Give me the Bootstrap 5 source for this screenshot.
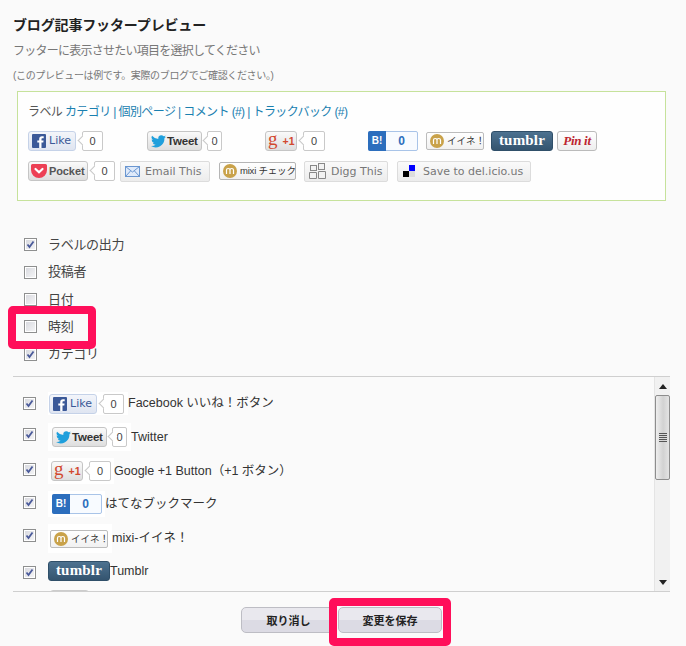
<!DOCTYPE html>
<html lang="ja"><head><meta charset="utf-8">
<link href="https://cdn.jsdelivr.net/npm/bootstrap@5.3.0/dist/css/bootstrap.min.css" rel="stylesheet">
<style>
html,body{height:646px;overflow:hidden}
body{background:#fafafa;color:#333;font:12px/1.2 "Liberation Sans","Noto Sans CJK JP",sans-serif;position:relative}
svg{flex:none}
.pg{width:686px;height:646px;padding:0 16px 0 13px}
.ttl{font-size:14px;font-weight:700;color:#222;height:18px;line-height:18px;margin-top:16px;letter-spacing:-.15px}
.sub{color:#777;font-size:12px;height:16px;line-height:16px;margin-top:9px;letter-spacing:-.75px}
.tiny{color:#777;font-size:10px;height:14px;line-height:14px;margin-top:10px;letter-spacing:-.35px}
.pv{margin:8px 4px 0;height:110px;background:#fefefe;border:1px solid #c6e29b;padding:11px 10px 0}
.lbl{height:18px;line-height:18px;font-size:12px;color:#555;letter-spacing:-.6px;white-space:nowrap}
.lbl a{color:#1a80b0;text-decoration:none}
.lbl i{font-style:normal;color:#1a80b0}
.wr{height:20px;margin-top:10px}
.wr2{margin-top:10px}
.s1{width:119px}.s2{width:118px}.s3{width:103px}
.wg{height:20px;line-height:18px;border:1px solid #c5c5c5;border-radius:3px;background:linear-gradient(#fafafa,#dedede);display:inline-flex;align-items:center;font-weight:700;font-size:11px;color:#444;flex:none;white-space:nowrap}
.fb{width:48px;background:linear-gradient(#f3f5fa,#dfe5f1);border-color:#c5d2e8;color:#3b5998;font:400 11px/18px "DejaVu Sans",sans-serif;padding-left:3px;gap:3px}
.tw{width:55px;padding-left:3px;gap:1px;color:#333;font-size:11.5px;letter-spacing:-.2px}
.gp{width:32px;padding-left:2px;gap:5px;color:#d2482f;font-size:10.5px}
.gp i{font:400 19px/14px "Liberation Serif",serif;color:#d2482f;height:18px}
.pk{width:60px;padding-left:2px;gap:2px;color:#555;font-size:11px;letter-spacing:-.1px}
.ct{height:20px;line-height:18px;border:1px solid #c9c9c9;background:#fff;text-align:center;font-size:11px;color:#444;position:relative;margin-left:6px;border-radius:2px;flex:none}
.ct::before{content:"";position:absolute;left:-4px;top:5px;width:7px;height:7px;border-left:1px solid #c9c9c9;border-bottom:1px solid #c9c9c9;background:#fff;transform:rotate(45deg)}
.c21{width:21px}.c15{width:15px;margin-left:5px}.c22{width:22px}
.hb{width:50px;height:20px;border:1px solid #a9c4e8;border-radius:2px;background:#f8fbff;display:flex;flex:none;color:#2c6ebd;font-weight:700;font-size:12px;line-height:18px}
.hb b{width:18px;margin:-1px 0 -1px -1px;background:#2c6ebd;color:#fff;text-align:center;border-radius:2px 0 0 2px;font-size:10px;line-height:20px}
.hb span{flex:1;text-align:center}
.mi{width:58px;height:18px;margin-left:8px;background:linear-gradient(#fff,#f1f1f1);border:1px solid #bcbcbc;border-radius:2px;display:inline-flex;align-items:center;padding-left:3px;gap:3px;font-size:9.5px;color:#333;flex:none;white-space:nowrap}
.tb{width:62px;height:20px;margin-left:7px;border-radius:3px;border:1px solid #2f4f69;background:linear-gradient(#4d7290,#34546f);color:#fff;font:700 15px/17px "Liberation Serif",serif;text-align:center;flex:none;letter-spacing:.2px}
.pi{width:40px;height:20px;margin-left:4px;border:1px solid #bbb;border-radius:3px;background:linear-gradient(#fff,#eee);color:#bd2530;font:italic 700 13px/18px "Liberation Serif",serif;text-align:center;flex:none;white-space:nowrap;letter-spacing:-.3px}
.sh{height:21px;border:1px solid #dcdcdc;border-radius:2px;background:linear-gradient(#fafafa,#ececec);font:11px/19px "DejaVu Sans",sans-serif;color:#777;display:inline-flex;align-items:center;flex:none;white-space:nowrap;gap:5px;padding-left:4px}
.em{width:90px;margin-left:5px}.dg{width:84px;margin-left:8px}.dl{width:134px;margin-left:9px;gap:8px;padding-left:5px}
.mc{width:77px;height:18px;margin-left:9px;background:linear-gradient(#fff,#f0f0f0);border:1px solid #b5b5b5;border-radius:2px;display:inline-flex;align-items:center;padding-left:3px;gap:3px;font-size:9.5px;letter-spacing:-.2px;color:#333;flex:none;white-space:nowrap}
.opts{margin:30px 0 0 11px;height:145px}
.op{height:27.4px;display:flex;align-items:center;gap:11px;font-size:13px;color:#444;letter-spacing:-.3px}
input.ck{appearance:none;-webkit-appearance:none;width:13px;height:13px;margin:0;border:1px solid #8e8f8f;background:linear-gradient(135deg,#d6d7dd,#f7f7f8);outline:1px solid #fff;outline-offset:-2px;flex:none}
input.ck:checked{background-image:url("data:image/svg+xml,%3Csvg xmlns='http://www.w3.org/2000/svg' viewBox='0 0 11 11'%3E%3Cpath d='M2.500 5.500l2 2.500 4-5.500' fill='none' stroke='%234a5a9a' stroke-width='1.800'/%3E%3C/svg%3E"),linear-gradient(135deg,#d6d7dd,#f7f7f8)}
.lst{height:216px;border-top:1px solid #cfcfcf;border-bottom:1px solid #cfcfcf;overflow:hidden}
.scr{flex:1;overflow:hidden;padding:15px 0 0 10px}
.rw{display:flex;align-items:center;font-size:12.5px;color:#333;white-space:nowrap}
.rw input{margin-right:12px;align-self:flex-start;margin-top:5px}
.bx{background:#fff;display:flex;align-items:center;flex:none}
.r1{height:23px;margin-bottom:8px}.r1 .bx{padding:0 4px 0 1px;height:23px}
.r2{height:28px;margin-bottom:7px}.r2 .bx{padding:0 4px;height:28px}
.r3{height:26px;margin-bottom:7px}.r3 .bx{padding:0 3px 0 3px;height:26px}
.r4{height:26px;margin-bottom:7px}.r4 .bx{padding:0 3px 0 4px;height:26px}
.r5{height:29px;margin-bottom:8px}.r5 .bx{padding:0 4px 0 2px;height:29px}
.r5 .mi{margin-left:0}
.r6{height:20px;margin-bottom:9px}.r6 .tb{margin-left:0}
.stub{width:39px;height:20px;margin-left:27px;border:1px solid #ccc;border-radius:3px;background:#fff}
.sb{width:16px;flex:none;background:#f1f1f1;border-left:1px solid #e4e4e4;display:flex;flex-direction:column;align-items:center}
.ar{height:18px;width:100%;display:flex;align-items:center;justify-content:center;flex:none}
.th{width:15px;height:85px;border:1px solid #8d8d8d;border-radius:2px;background:linear-gradient(90deg,#eee,#d2d2d2 55%,#e4e4e4);display:flex;align-items:center;justify-content:center;flex:none}
.sp{flex:1}
.ft{margin-top:15px;gap:2px;padding-left:228px}
.fbtn{height:26px;padding:2px 0 0;border:1px solid #bdbdc4;border-radius:5px;background:linear-gradient(#e9e8ee 50%,#dcdbe4 50%);font:700 11px/22px "Liberation Sans","Noto Sans CJK JP",sans-serif;color:#222}
.fbtn:hover{background:#e4e3eb;border-color:#bdbdc4;color:#222}
.f1{width:95px}.f2{width:104px}
.hl{position:absolute;border:8px solid #ff0f5a;border-radius:5px;pointer-events:none}
.h1{left:8px;top:306px;width:88px;height:43px}
.h2{left:329px;top:598px;width:122px;height:48px}
</style></head><body>
<div class="pg">
<div class="ttl">ブログ記事フッタープレビュー</div>
<div class="sub">フッターに表示させたい項目を選択してください</div>
<div class="tiny">(このプレビューは例です。実際のブログでご確認ください。)</div>
<div class="pv">
 <div class="lbl">ラベル <a href="#">カテゴリ</a> <i>|</i> <a href="#">個別ページ</a> <i>|</i> <a href="#">コメント (#)</a> <i>|</i> <a href="#">トラックバック (#)</a></div>
 <div class="wr d-flex align-items-center">
  <div class="s1 d-flex"><span class="wg fb"><svg width="14" height="14" viewBox="0 0 14 14"><rect width="14" height="14" rx="1" fill="#3b5998"/><path d="M9.500 14V8.600h1.800l.3-2.100H9.500V5.200c0-.6.2-1 1-1h1.200V2.300c-.2 0-.9-.1-1.700-.1-1.700 0-2.800 1-2.800 2.800v1.500H5.300v2.100h1.900V14z" fill="#fff"/></svg>Like</span><span class="ct c21">0</span></div>
  <div class="s2 d-flex"><span class="wg tw"><svg width="15" height="13" viewBox="0 0 24 20"><path d="M24 2.400a9.800 9.800 0 0 1-2.800.8A5 5 0 0 0 23.300.4a9.800 9.800 0 0 1-3.100 1.200 4.900 4.900 0 0 0-8.400 4.500A14 14 0 0 1 1.700.9a4.900 4.900 0 0 0 1.500 6.600 4.900 4.900 0 0 1-2.200-.6 4.900 4.900 0 0 0 3.900 4.900 4.900 4.900 0 0 1-2.200.1 4.900 4.900 0 0 0 4.600 3.400A9.900 9.900 0 0 1 0 17.300 14 14 0 0 0 21.500 4.900 10 10 0 0 0 24 2.400z" fill="#1f9fdc"/></svg>Tweet</span><span class="ct c15">0</span></div>
  <div class="s3 d-flex"><span class="wg gp"><i>g</i>+1</span><span class="ct c22">0</span></div>
  <div class="hb"><b>B!</b><span>0</span></div>
  <span class="mi"><svg width="14" height="14" viewBox="0 0 14 14"><circle cx="7" cy="7" r="7" fill="#c9a24a"/><path d="M3.500 10V6q0-1.500 1.700-1.500T7 6v4M7 6q0-1.500 1.700-1.500T10.500 6v4" fill="none" stroke="#fff" stroke-width="1.200"/></svg>イイネ！</span>
  <div class="tb">tumblr</div>
  <div class="pi">Pin it</div>
 </div>
 <div class="wr wr2 d-flex align-items-center">
  <span class="wg pk"><svg width="16" height="14" viewBox="0 0 16 14"><path d="M1.500 0h13A1.500 1.500 0 0 1 16 1.500V6A8 8 0 0 1 0 6V1.500A1.500 1.500 0 0 1 1.500 0z" fill="#ed4055"/><path d="M4.500 5L8 8.300 11.500 5" fill="none" stroke="#fff" stroke-width="2.200" stroke-linecap="round"/></svg>Pocket</span><span class="ct c21">0</span>
  <span class="sh em"><svg width="15" height="11" viewBox="0 0 15 11"><rect x=".5" y=".5" width="14" height="10" fill="#dfeafa" stroke="#6a96d0"/><path d="M.5.500L7.500 6 14.500.5M.5 10.500L5.500 5M14.500 10.500L9.500 5" fill="none" stroke="#6a96d0"/></svg>Email This</span>
  <span class="mc"><svg width="14" height="14" viewBox="0 0 14 14"><circle cx="7" cy="7" r="7" fill="#c9a24a"/><path d="M3.500 10V6q0-1.500 1.700-1.500T7 6v4M7 6q0-1.500 1.700-1.500T10.500 6v4" fill="none" stroke="#fff" stroke-width="1.200"/></svg>mixi チェック</span>
  <span class="sh dg"><svg width="17" height="16" viewBox="0 0 17 16"><g fill="#f2f2f2" stroke="#888"><rect x="1.500" y="2.500" width="6" height="5"/><rect x="9.500" y=".5" width="6" height="6"/><path d="M.5 15.500v-6h7v6zM9.500 15.500v-7h7v7z"/></g></svg>Digg This</span>
  <span class="sh dl"><svg width="12" height="12" viewBox="0 0 12 12"><rect x="6" width="6" height="6" fill="#00f"/><rect y="6" width="6" height="6" fill="#000"/><rect x="6" y="6" width="6" height="6" fill="#ddd"/></svg>Save to del.icio.us</span>
 </div>
</div>
<div class="opts">
 <div class="op"><input class="ck" type="checkbox" checked aria-label="ラベルの出力">ラベルの出力</div>
 <div class="op"><input class="ck" type="checkbox" aria-label="投稿者">投稿者</div>
 <div class="op"><input class="ck" type="checkbox" aria-label="日付">日付</div>
 <div class="op"><input class="ck" type="checkbox" aria-label="時刻">時刻</div>
 <div class="op"><input class="ck" type="checkbox" checked aria-label="カテゴリ">カテゴリ</div>
</div>
<div class="lst d-flex">
 <div class="scr">
  <div class="rw r1"><input class="ck" type="checkbox" checked aria-label="Facebook"><span class="bx"><span class="wg fb"><svg width="14" height="14" viewBox="0 0 14 14"><rect width="14" height="14" rx="1" fill="#3b5998"/><path d="M9.500 14V8.600h1.800l.3-2.100H9.500V5.200c0-.6.2-1 1-1h1.200V2.300c-.2 0-.9-.1-1.700-.1-1.700 0-2.800 1-2.800 2.800v1.500H5.300v2.100h1.900V14z" fill="#fff"/></svg>Like</span><span class="ct c21">0</span></span>Facebook いいね！ボタン</div>
  <div class="rw r2"><input class="ck" type="checkbox" checked aria-label="Twitter"><span class="bx"><span class="wg tw"><svg width="15" height="13" viewBox="0 0 24 20"><path d="M24 2.400a9.800 9.800 0 0 1-2.800.8A5 5 0 0 0 23.300.4a9.800 9.800 0 0 1-3.100 1.200 4.900 4.900 0 0 0-8.400 4.500A14 14 0 0 1 1.700.9a4.900 4.900 0 0 0 1.500 6.600 4.900 4.900 0 0 1-2.200-.6 4.900 4.900 0 0 0 3.900 4.900 4.900 4.900 0 0 1-2.200.1 4.900 4.900 0 0 0 4.600 3.400A9.900 9.900 0 0 1 0 17.300 14 14 0 0 0 21.500 4.900 10 10 0 0 0 24 2.400z" fill="#1f9fdc"/></svg>Tweet</span><span class="ct c15">0</span></span>Twitter</div>
  <div class="rw r3"><input class="ck" type="checkbox" checked aria-label="Google"><span class="bx"><span class="wg gp"><i>g</i>+1</span><span class="ct c22">0</span></span>Google +1 Button（+1 ボタン）</div>
  <div class="rw r4"><input class="ck" type="checkbox" checked aria-label="はてな"><span class="bx"><span class="hb"><b>B!</b><span>0</span></span></span>はてなブックマーク</div>
  <div class="rw r5"><input class="ck" type="checkbox" checked aria-label="mixi"><span class="bx"><span class="mi"><svg width="14" height="14" viewBox="0 0 14 14"><circle cx="7" cy="7" r="7" fill="#c9a24a"/><path d="M3.500 10V6q0-1.500 1.700-1.500T7 6v4M7 6q0-1.500 1.700-1.500T10.500 6v4" fill="none" stroke="#fff" stroke-width="1.200"/></svg>イイネ！</span></span>mixi-イイネ！</div>
  <div class="rw r6"><input class="ck" type="checkbox" checked aria-label="Tumblr"><span class="tb">tumblr</span>Tumblr</div>
  <div class="stub"></div>
 </div>
 <div class="sb">
  <div class="ar"><svg width="8" height="5" viewBox="0 0 8 5"><path d="M4 0l4 5H0z" fill="#222"/></svg></div>
  <div class="th"><svg width="8" height="9" viewBox="0 0 8 9"><path d="M0 .5h8M0 2.500h8M0 4.500h8M0 6.500h8M0 8.500h8" stroke="#555"/></svg></div>
  <div class="sp"></div>
  <div class="ar"><svg width="8" height="5" viewBox="0 0 8 5"><path d="M4 5l4-5H0z" fill="#222"/></svg></div>
 </div>
</div>
<div class="ft d-flex">
 <button class="btn fbtn f1" type="button">取り消し</button>
 <button class="btn fbtn f2" type="button">変更を保存</button>
</div>
</div>
<div class="hl h1"></div>
<div class="hl h2"></div>
</body></html>
